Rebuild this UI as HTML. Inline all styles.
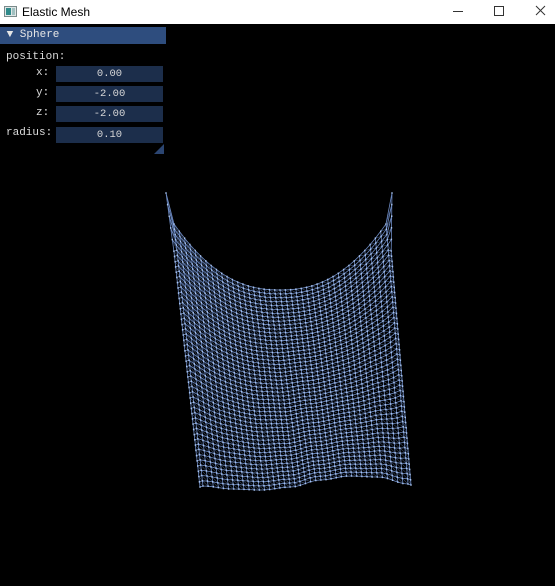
<!DOCTYPE html>
<html><head><meta charset="utf-8"><style>
body{margin:0;width:555px;height:586px;background:#000;overflow:hidden;font-family:"Liberation Mono",monospace;position:relative}
.title{position:absolute;left:0;top:0;width:555px;height:24px;background:#fff;font-family:"Liberation Sans",sans-serif;font-size:12px;color:#000}
.title span{position:absolute;left:22px;top:5px}
.hdr{position:absolute;left:0;top:27px;width:166px;height:17px;background:#2e4d7e;color:#e6e6e6;font-size:11px;line-height:17px}
.lbl{position:absolute;color:#dcdcdc;font-size:11px}
.in{position:absolute;left:56px;width:107px;height:16px;background:#1c2e4b;color:#d8d8d8;font-size:10.5px;text-align:center;line-height:16px}
</style></head><body>
<div class="title">
<svg style="position:absolute;left:4px;top:6px" width="13" height="11"><rect x="0.5" y="0.5" width="12" height="10" fill="#dfe6e6" stroke="#7a8a8a"/><rect x="2" y="2" width="5" height="7" fill="#2f8a8a"/><rect x="8" y="2" width="3" height="7" fill="#a0c0c0"/></svg>
<span>Elastic Mesh</span>
<svg style="position:absolute;left:440px;top:0" width="115" height="24"><line x1="13" y1="11.5" x2="23" y2="11.5" stroke="#333"/><rect x="54.5" y="6.5" width="9" height="9" fill="none" stroke="#333"/><path d="M96 6L105 15M105 6L96 15" stroke="#333"/></svg>
</div>
<div class="hdr">&nbsp;▼ Sphere</div>
<div class="lbl" style="left:6px;top:51px">position:</div>
<div class="lbl" style="left:36px;top:67px">x:</div>
<div class="lbl" style="left:36px;top:87px">y:</div>
<div class="lbl" style="left:36px;top:107px">z:</div>
<div class="lbl" style="left:6px;top:127px">radius:</div>
<div class="in" style="top:66px">0.00</div>
<div class="in" style="top:86px">-2.00</div>
<div class="in" style="top:106px">-2.00</div>
<div class="in" style="top:127px">0.10</div>
<svg style="position:absolute;left:153px;top:143px" width="12" height="12"><path d="M11 1L11 11L1 11Z" fill="#2b4571"/></svg>
<svg id="m" style="position:absolute;left:0;top:0" width="555" height="586"></svg>
<script>
(function(){
var NC=42,NR=50,s='',d='';
function lerpPts(p,u){var n=p.length-1,t=u*n,i=Math.min(n-1,Math.floor(t)),f=t-i;var a=p[i],b=p[i+1];var g=(1-Math.cos(f*Math.PI))/2;return a+(b-a)*g;}
var by=[486,489,490,487,480,476,477,484];
function topPt(i){
 var u=(i-1)/(NC-2), w=2*u-1;
 return [174+212*u, 290-66*Math.pow(Math.abs(w),2.3)];
}
function Pin(i,j){
 var u=(i-1)/(NC-2),v=j/NR,t=topPt(i);
 var bx=203+205*u, byy=lerpPts(by,u);
 return [t[0]+(bx-t[0])*v, t[1]+(byy-t[1])*v];
}
function P(i,j){
 if(i==0||i==NC){
  var k=i==0?1:NC-1, sg=i==0?-1:1, c=i==0?[166,193]:[392,193];
  var q=Pin(k,j), q0=Pin(k,0), f=Math.max(0,1-j/5);
  var base=[q[0]+sg*3,q[1]+1];
  return [base[0]+(c[0]-q0[0]-sg*3)*f, base[1]+(c[1]-q0[1]-1)*f];
 }
 return Pin(i,j);
}
var pts=[];
for(var j=0;j<=NR;j++){pts[j]=[];for(var i=0;i<=NC;i++)pts[j][i]=P(i,j);}
for(var j=0;j<=NR;j++){s+='M'+pts[j].map(function(p){return p[0].toFixed(1)+' '+p[1].toFixed(1)}).join('L');}
for(var i=0;i<=NC;i++){s+='M';var a=[];for(var j=0;j<=NR;j++)a.push(pts[j][i][0].toFixed(1)+' '+pts[j][i][1].toFixed(1));s+=a.join('L');}
for(var j=0;j<NR;j++)for(var i=0;i<NC;i++){var p=pts[j][i],q=pts[j+1][i+1];d+='M'+p[0].toFixed(1)+' '+p[1].toFixed(1)+'L'+q[0].toFixed(1)+' '+q[1].toFixed(1);}
var dots='';for(var j=0;j<=NR;j++)for(var i=0;i<=NC;i++){var p=pts[j][i];dots+='M'+(p[0]-0.7).toFixed(1)+' '+p[1].toFixed(1)+'h1.4';}
document.getElementById('m').innerHTML='<path d="'+d+'" stroke="#4a6390" stroke-width="0.5" fill="none"/><path d="'+s+'" stroke="#6d8ac2" stroke-width="0.8" fill="none"/><path d="'+dots+'" stroke="#a9c5f2" stroke-width="1.6" fill="none"/>';
})();
</script>
</body></html>
